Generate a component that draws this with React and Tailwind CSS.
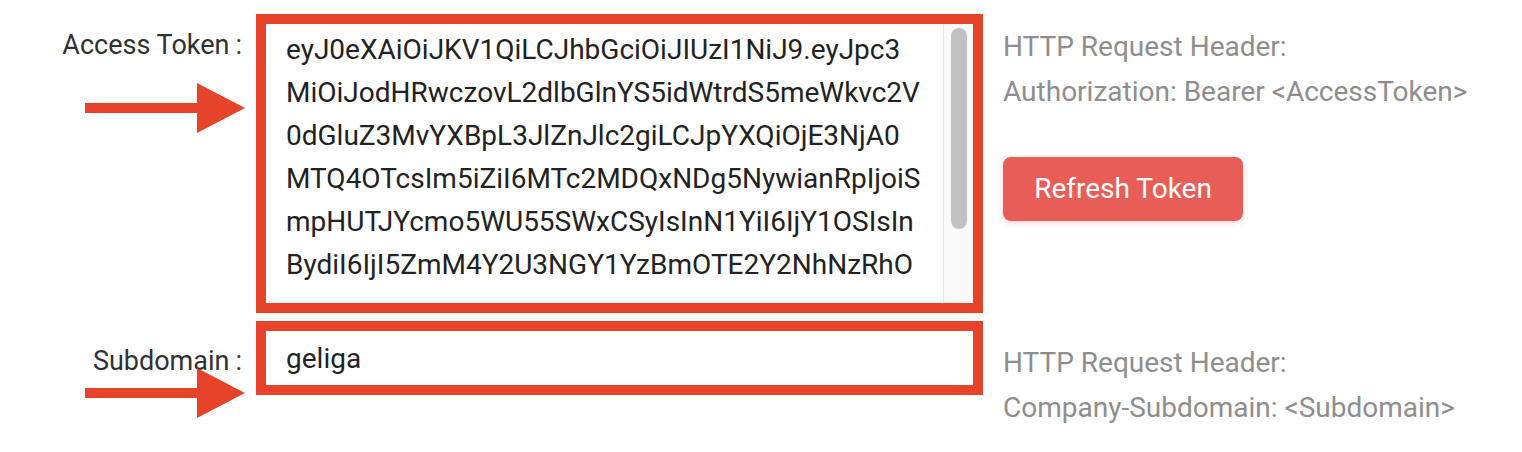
import React from 'react';

const TOKEN_LINES = [
  'eyJ0eXAiOiJKV1QiLCJhbGciOiJIUzI1NiJ9.eyJpc3',
  'MiOiJodHRwczovL2dlbGlnYS5idWtrdS5meWkvc2V',
  '0dGluZ3MvYXBpL3JlZnJlc2giLCJpYXQiOjE3NjA0',
  'MTQ4OTcsIm5iZiI6MTc2MDQxNDg5NywianRpIjoiS',
  'mpHUTJYcmo5WU55SWxCSyIsInN1YiI6IjY1OSIsIn',
  'BydiI6IjI5ZmM4Y2U3NGY1YzBmOTE2Y2NhNzRhO',
];

// red annotation arrow pointing right
const Arrow = ({ className }) => (
  <svg className={className} width="162" height="50" viewBox="0 0 162 50">
    <rect x="0" y="20" width="114" height="10" fill="#e6432a" />
    <polygon points="112,0 160,25 112,50" fill="#e6432a" />
  </svg>
);

export default function App() {
  return (
    <div className="relative h-[452px] w-[1522px] overflow-hidden bg-white pt-[14px] font-['Roboto','Liberation_Sans',sans-serif] text-[28px]">
      {/* Access Token row */}
      <div className="flex items-start">
        <div className="mt-[10px] w-[256px] pr-[14px] text-right text-[27px] leading-[42px] text-[#303133]">
          Access Token<span className="ml-[6px]">:</span>
        </div>
        <div className="flex h-[299px] w-[727px] border-[10px] border-[#e6432a] bg-white">
          <div className="flex-1 overflow-hidden pl-[20px] pt-[4px] leading-[43px] text-[#222]">
            {TOKEN_LINES.map((line) => (
              <div key={line} className="whitespace-nowrap">{line}</div>
            ))}
          </div>
          <div className="w-[30px] border-l border-[#e6e6e6] bg-[#fafafa] pt-[4px]">
            <div className="mx-auto h-[201px] w-[16px] rounded-full bg-[#c1c1c1]" />
          </div>
        </div>
        <div className="ml-[20px] mt-[10px] flex flex-col items-start">
          <div className="leading-[45px] text-[#8e8e8e]">
            <div>HTTP Request Header:</div>
            <div>Authorization: Bearer &lt;AccessToken&gt;</div>
          </div>
          <button className="mt-[43px] h-[64px] w-[240px] rounded-[8px] bg-[#e95d58] text-white shadow-[0_2px_6px_rgba(233,93,88,0.25)]">
            Refresh Token
          </button>
        </div>
      </div>

      {/* Subdomain row */}
      <div className="mt-[8px] flex items-start">
        <div className="mt-[18px] w-[256px] pr-[14px] text-right text-[27px] leading-[44px] text-[#303133]">
          Subdomain<span className="ml-[6px]">:</span>
        </div>
        <div className="h-[74px] w-[727px] border-[10px] border-[#e6432a] bg-white pl-[20px] leading-[56px] text-[#222]">
          geliga
        </div>
        <div className="ml-[20px] mt-[19px] leading-[45px] text-[#8e8e8e]">
          <div>HTTP Request Header:</div>
          <div>Company-Subdomain: &lt;Subdomain&gt;</div>
        </div>
      </div>

      <Arrow className="absolute left-[85px] top-[83px]" />
      <Arrow className="absolute left-[85px] top-[368px]" />
    </div>
  );
}
